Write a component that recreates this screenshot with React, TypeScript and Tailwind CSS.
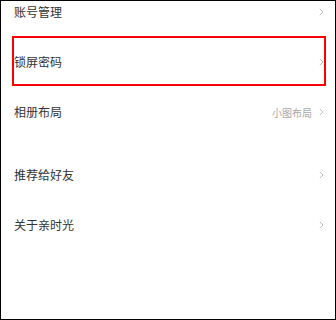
const rows = [
  { label: "账号管理" },
  { label: "锁屏密码", marked: true },
  { label: "相册布局", value: "小图布局" },
  { label: "推荐给好友", gapBefore: true },
  { label: "关于亲时光" },
];

function Chevron() {
  return (
    <svg width="5" height="8" viewBox="0 0 5 8" className="shrink-0">
      <path d="M0.8 0.8 L4 4 L0.8 7.2" fill="none" stroke="#b5b5b5" strokeWidth="0.9" />
    </svg>
  );
}

export default function App() {
  return (
    <div
      className="h-[320px] w-[336px] overflow-hidden border border-black bg-white"
      style={{ fontFamily: '"Noto Sans CJK SC", "Noto Sans", sans-serif' }}
    >
      <div className="-mt-[14px] flex flex-col">
        {rows.map((row) => (
          <div
            key={row.label}
            className={`relative flex h-[50px] items-center justify-between pl-[13px] pr-[11px] ${row.gapBefore ? "mt-[13px]" : ""}`}
          >
            <span className="text-[12px] text-[#333333]">{row.label}</span>
            <div className="flex items-center gap-[7px]">
              {row.value && <span className="text-[10px] text-[#a8a8a8]">{row.value}</span>}
              <Chevron />
            </div>
            {row.marked && (
              <div className="pointer-events-none absolute top-[-1px] bottom-[1px] left-[11px] right-[9px] border-2 border-[#ff0000]" />
            )}
          </div>
        ))}
      </div>
    </div>
  );
}
